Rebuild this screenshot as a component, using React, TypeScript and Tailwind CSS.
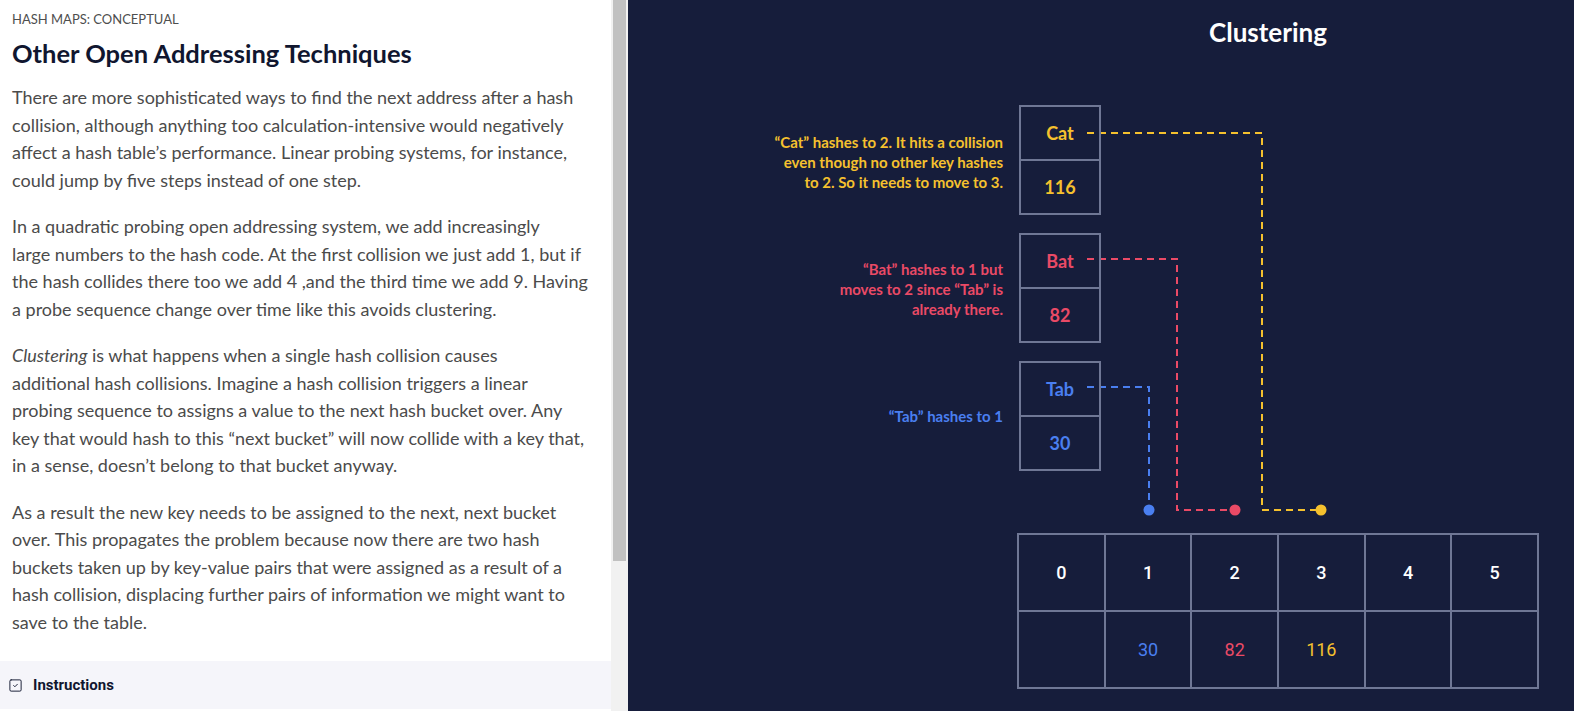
import { SquareCheck } from "lucide-react";

const yellow = "#f5c12e";
const red = "#ea4a66";
const blue = "#4a7ff0";

const body = "text-[18px] leading-[27.5px] text-[#4b4b4b] mb-[19px] whitespace-nowrap";

function KeyBox({ top, k, v, color }: { top: string; k: string; v: string; color: string }) {
  return (
    <div className={`absolute left-[391px] ${top} w-[82px] h-[110px] border-2 border-[#6f7795] flex flex-col font-bold text-[18px]`} style={{ color }}>
      <div className="flex-1 flex items-center justify-center">{k}</div>
      <div className="flex-1 flex items-center justify-center border-t-2 border-[#6f7795]">{v}</div>
    </div>
  );
}

function Wire({ d, color, cx }: { d: string; color: string; cx: number }) {
  return (
    <>
      <path d={d} fill="none" stroke={color} strokeWidth="2" strokeDasharray="7 5" />
      <circle cx={cx} cy={510} r={5.5} fill={color} />
    </>
  );
}

function App() {
  const values = ["", "30", "82", "116", "", ""];
  const colors = ["", blue, red, yellow, "", ""];

  return (
    <div className="flex h-[711px] w-[1574px] overflow-hidden" style={{ fontFamily: "Lato, 'Open Sans', sans-serif" }}>
      <div className="w-[611px] flex flex-col bg-white overflow-hidden">
        <div className="flex-1 pl-[12px] pr-[8px] pt-[10px]">
          <p className="text-[13px] text-[#4e4e4e] leading-[18px]">HASH MAPS: CONCEPTUAL</p>
          <h1 className="mt-[10px] mb-[16px] text-[25.5px] font-bold text-[#10162f] leading-[30px]">Other Open Addressing Techniques</h1>
          <p className={body}>
            There are more sophisticated ways to find the next address after a hash<br />
            collision, although anything too calculation-intensive would negatively<br />
            affect a hash table’s performance. Linear probing systems, for instance,<br />
            could jump by five steps instead of one step.
          </p>
          <p className={body}>
            In a quadratic probing open addressing system, we add increasingly<br />
            large numbers to the hash code. At the first collision we just add 1, but if<br />
            the hash collides there too we add 4 ,and the third time we add 9. Having<br />
            a probe sequence change over time like this avoids clustering.
          </p>
          <p className={body}>
            <em>Clustering</em> is what happens when a single hash collision causes<br />
            additional hash collisions. Imagine a hash collision triggers a linear<br />
            probing sequence to assigns a value to the next hash bucket over. Any<br />
            key that would hash to this “next bucket” will now collide with a key that,<br />
            in a sense, doesn’t belong to that bucket anyway.
          </p>
          <p className={body}>
            As a result the new key needs to be assigned to the next, next bucket<br />
            over. This propagates the problem because now there are two hash<br />
            buckets taken up by key-value pairs that were assigned as a result of a<br />
            hash collision, displacing further pairs of information we might want to<br />
            save to the table.
          </p>
        </div>
        <div className="h-[48px] mb-[2px] bg-[#f5f5fa] flex items-center gap-[10px] px-[8px]">
          <SquareCheck size={15} strokeWidth={1.5} className="text-[#10162f]" />
          <span className="text-[15px] font-bold text-[#10162f]" style={{ fontFamily: "Roboto, sans-serif" }}>Instructions</span>
        </div>
      </div>

      <div className="w-[17px] bg-[#f1f1f1]">
        <div className="ml-[2px] w-[13px] h-[561px] bg-[#c1c1c1]" />
      </div>

      <div className="relative flex-1 bg-[#161d3b]">
        <h2 className="pt-[15px] pl-[334px] text-center text-[26px] font-bold text-white leading-[34px]">Clustering</h2>

        <svg className="absolute inset-0" width="946" height="711">
          <Wire d="M459 133 H634 V510 H693" color={yellow} cx={693} />
          <Wire d="M459 259 H549 V510 H607" color={red} cx={607} />
          <Wire d="M459 387 H521 V510" color={blue} cx={521} />
        </svg>

        <p className="absolute top-[132px] right-[571px] text-right text-[15px] leading-[20px] font-bold" style={{ color: yellow }}>
          “Cat” hashes to 2. It hits a collision<br />even though no other key hashes<br />to 2. So it needs to move to 3.
        </p>
        <p className="absolute top-[259px] right-[571px] text-right text-[15px] leading-[20px] font-bold" style={{ color: red }}>
          “Bat” hashes to 1 but<br />moves to 2 since “Tab” is<br />already there.
        </p>
        <p className="absolute top-[406px] right-[571px] text-right text-[15px] leading-[20px] font-bold" style={{ color: blue }}>
          “Tab” hashes to 1
        </p>

        <KeyBox top="top-[105px]" k="Cat" v="116" color={yellow} />
        <KeyBox top="top-[233px]" k="Bat" v="82" color={red} />
        <KeyBox top="top-[361px]" k="Tab" v="30" color={blue} />

        <div className="absolute left-[389px] top-[533px] w-[522px] grid grid-cols-6 border-l-2 border-t-2 border-[#6f7795] text-[18px]" style={{ fontFamily: "Roboto, sans-serif" }}>
          {[0, 1, 2, 3, 4, 5].map((n) => (
            <div key={n} className="h-[77px] border-r-2 border-b-2 border-[#6f7795] flex items-center justify-center text-white font-medium">
              {n}
            </div>
          ))}
          {values.map((v, i) => (
            <div key={i} className="h-[77px] border-r-2 border-b-2 border-[#6f7795] flex items-center justify-center" style={{ color: colors[i] }}>
              {v}
            </div>
          ))}
        </div>
      </div>
    </div>
  );
}

export default App;
